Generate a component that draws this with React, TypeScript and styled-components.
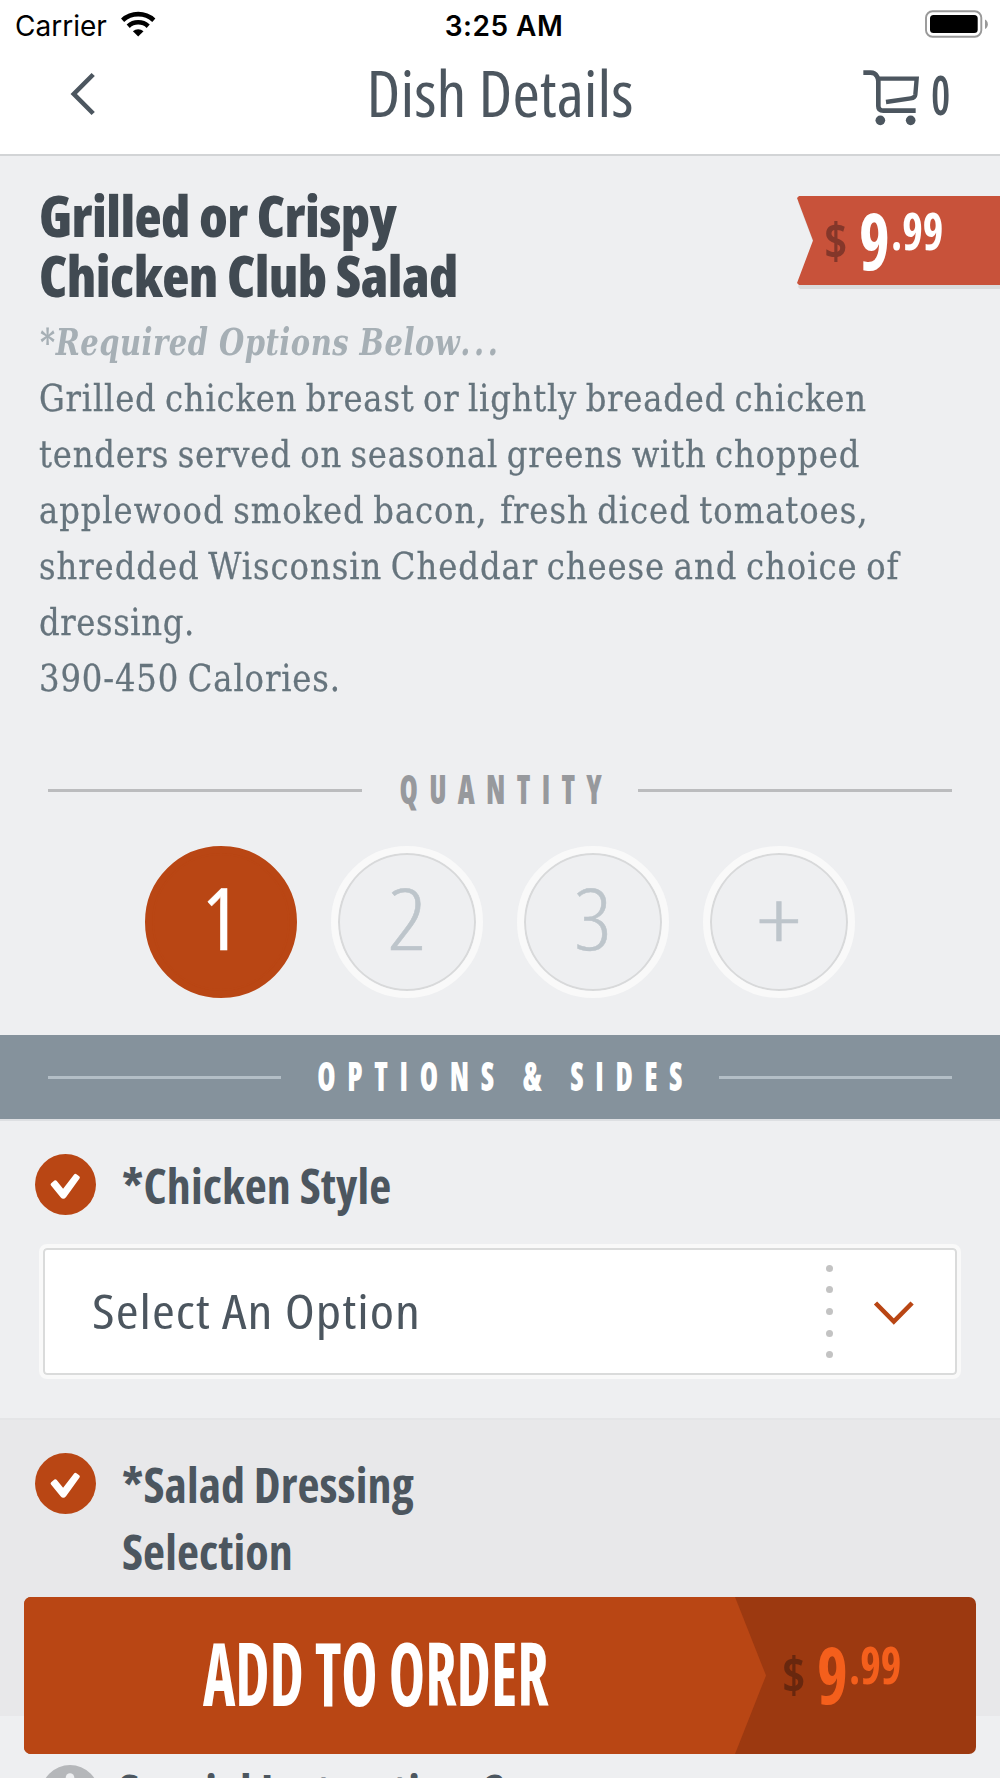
import React from "react";
import styled, { createGlobalStyle } from "styled-components";

const SANS = '"Open Sans", "Noto Sans", sans-serif';
const SERIF = '"DejaVu Serif", "Liberation Serif", serif';
const SYSTEM = 'Inter, "Liberation Sans", sans-serif';

const color = {
  slate: "#4c565f",
  title: "#414a52",
  body: "#66747d",
  muted: "#a6afb5",
  page: "#eeeff1",
  shade: "#e8e8ea",
  rust: "#b94614",
  rustDark: "#9c3910",
  bar: "#85929c",
};

const GlobalStyle = createGlobalStyle`
  * { box-sizing: border-box; }
  body { margin: 0; background: ${color.page}; }
  button { border: 0; padding: 0; margin: 0; background: none; font: inherit; text-align: left; }
`;

const Screen = styled.div`
  position: relative;
  width: 1000px;
  height: 1778px;
  overflow: hidden;
  background: ${color.page};
  font-family: ${SANS};
  font-stretch: 75%;
  color: ${color.slate};
`;

const Header = styled.header`
  height: 156px;
  background: #fff;
  border-bottom: 2px solid #d2d4d6;
`;

const StatusBar = styled.div`
  display: grid;
  grid-template-columns: 1fr auto 1fr;
  height: 51px;
  padding: 0 12px 0 15px;
  font-family: ${SYSTEM};
  font-stretch: 100%;
  font-size: 28px;
  line-height: 52px;
  color: #000;
`;

const Carrier = styled.div`
  display: flex;
  align-items: flex-start;
  gap: 14px;

  svg { margin-top: 11px; }
`;

const Clock = styled.div`
  font-weight: 600;
  letter-spacing: 0.5px;
  padding-left: 5px;
`;

const BatteryCell = styled.div`
  display: flex;
  justify-content: flex-end;
  align-items: flex-start;
  padding-top: 10px;
`;

const NavBar = styled.nav`
  display: grid;
  grid-template-columns: 300px 1fr 300px;
  height: 80px;
  align-items: center;
`;

const BackButton = styled.button`
  display: flex;
  padding-left: 69px;
  padding-top: 5px;
`;

const NavTitle = styled.h1`
  margin: 0;
  text-align: center;
  font-size: 64px;
  font-weight: 400;
  line-height: 80px;
  transform: translateY(2px) scaleX(1.035);
`;

const CartButton = styled.button`
  display: flex;
  align-items: center;
  height: 80px;
  padding-left: 162px;
  color: ${color.slate};

  svg { margin-top: 13px; flex: none; }
`;

const CartCount = styled.span`
  margin-left: 10px;
  font-size: 54px;
  font-weight: 600;
  line-height: 80px;
  transform: translateY(3px) scaleX(0.8);
  transform-origin: 0 50%;
`;

const Intro = styled.section`
  display: flex;
  justify-content: space-between;
  height: 606px;
`;

const IntroText = styled.div`
  padding: 29px 0 0 39px;
`;

const DishName = styled.h2`
  margin: 0 0 9px;
  font-size: 56px;
  font-weight: 800;
  line-height: 60px;
  letter-spacing: -0.6px;
  white-space: nowrap;
  color: ${color.title};
`;

const RequiredNote = styled.p`
  width: 600px;
  margin: 0 0 0 1px;
  font-family: ${SERIF};
  font-style: italic;
  font-weight: 700;
  font-stretch: 100%;
  font-size: 38px;
  line-height: 56px;
  letter-spacing: 0.6px;
  white-space: nowrap;
  color: ${color.muted};
  transform: scaleX(0.764);
  transform-origin: 0 0;
`;

const Ellipsis = styled.span`
  letter-spacing: 4.8px;
`;

const Description = styled.p`
  width: 740px;
  margin: 0;
  font-family: ${SERIF};
  font-stretch: 100%;
  font-size: 38px;
  line-height: 56.1px;
  word-spacing: -3px;
  color: ${color.body};
  -webkit-text-stroke: 0.3px ${color.body};
  transform: scaleX(0.85);
  transform-origin: 0 0;
`;

const DescriptionLine = styled.span<{ $tracking: number }>`
  display: block;
  white-space: pre;
  letter-spacing: ${(p) => p.$tracking}px;
`;

const PriceTag = styled.div`
  flex: none;
  width: 203px;
  height: 94px;
  margin-top: 40px;
  filter: drop-shadow(1px 4px 0 #dadbdc);
`;

const PriceTagShape = styled.div`
  height: 89px;
  padding: 16.5px 0 0 27px;
  background: #c8523a;
  clip-path: polygon(0 2px, 2px 0, 100% 0, 100% 100%, 2px 100%, 0 87px, 16px 50%);
`;

const PriceRow = styled.div<{ $sign: string; $amount: string }>`
  display: flex;
  align-items: flex-start;
  font-weight: 700;
  line-height: 57px;
  color: ${(p) => p.$amount};

  > :first-child { color: ${(p) => p.$sign}; }
`;

const Glyph = styled.span<{ $size: number; $width: number; $scale: number; $rise: number }>`
  flex: none;
  width: ${(p) => p.$width}px;
  margin-top: ${(p) => -p.$rise}px;
  font-size: ${(p) => p.$size}px;
  white-space: nowrap;
  transform: scaleX(${(p) => p.$scale});
  transform-origin: 0 0;
`;

const Heading = styled.div<{ $line: string; $lineWidth: number; $text: string; $bg?: string; $height: number }>`
  display: flex;
  align-items: center;
  height: ${(p) => p.$height}px;
  padding: 0 48px;
  background: ${(p) => p.$bg ?? "transparent"};
  color: ${(p) => p.$text};

  &::before,
  &::after {
    content: "";
    flex: none;
    width: ${(p) => p.$lineWidth}px;
    height: 3px;
    background: ${(p) => p.$line};
  }
`;

const HeadingCell = styled.div`
  display: flex;
  flex: 1;
  min-width: 0;
  justify-content: center;
`;

const HeadingText = styled.h3<{ $tracking: number }>`
  flex: none;
  margin: -4px -16px 0 0;
  font-size: 41px;
  font-weight: 800;
  line-height: 56px;
  letter-spacing: ${(p) => p.$tracking}px;
  white-space: nowrap;
  transform: translateX(-2px) scaleX(0.72);
`;

const QuantityRow = styled.div`
  display: flex;
  justify-content: center;
  gap: 34px;
  height: 217px;
  padding-top: 28px;
`;

const QuantityButton = styled.button<{ $active?: boolean }>`
  display: flex;
  align-items: center;
  justify-content: center;
  width: 152px;
  height: 152px;
  border: 7px solid ${(p) => (p.$active ? color.rust : "#f9f9f9")};
  border-radius: 50%;
  background: ${(p) => (p.$active ? color.rust : color.page)};
  box-shadow: inset 0 0 0 2px ${(p) => (p.$active ? color.rust : "#d8d9da")};
  color: ${(p) => (p.$active ? "#fff" : "#bdc5cb")};
`;

const QuantityLabel = styled.span<{ $weight: number; $scale: number; $drop?: number }>`
  font-size: 85px;
  font-weight: ${(p) => p.$weight};
  line-height: 130px;
  -webkit-text-stroke: 0.5px currentColor;
  transform: translate(-0.5px, ${(p) => (p.$drop ?? 0) - 5}px) scaleX(${(p) => p.$scale});
`;

const OptionSection = styled.section<{ $shade?: boolean; $height: number }>`
  height: ${(p) => p.$height}px;
  padding: 33px 39px 0 35px;
  background: ${(p) => (p.$shade ? color.shade : color.page)};
  border-top: 2px solid ${(p) => (p.$shade ? "#e4e5e7" : "#dddfe2")};
`;

const OptionHeader = styled.div`
  display: flex;
  align-items: flex-start;
  gap: 26px;
  height: 61px;

  svg { flex: none; }
`;

const OptionTitle = styled.h4`
  width: 340px;
  margin: -1px 0 0;
  font-size: 48px;
  font-weight: 700;
  line-height: 66.7px;
  letter-spacing: 0.1px;
`;

const Select = styled.button`
  display: flex;
  align-items: center;
  width: 922px;
  height: 135px;
  margin: 29px 0 0 4px;
  padding: 0 42px 0 49px;
  border: 4px solid #f9f9f9;
  border-radius: 8px;
  background: #fff;
  box-shadow: inset 0 0 0 2px #dadbdb;
  color: ${color.slate};
`;

const SelectLabel = styled.span`
  flex: 1;
  margin-top: -1px;
  font-size: 48px;
  letter-spacing: 0.9px;
  line-height: 66px;
  transform: scaleX(1.15);
  transform-origin: 0 50%;
`;

const Dots = styled.span`
  display: flex;
  flex-direction: column;
  gap: 14.5px;
  margin-right: 40px;
`;

const Dot = styled.i`
  width: 7.2px;
  height: 7.2px;
  border-radius: 50%;
  background: #c3c3c3;
`;

const Chevron = styled.svg`
  margin-top: 2px;
`;

const InstructionSection = styled.section`
  display: flex;
  align-items: flex-start;
  gap: 19px;
  padding: 49px 0 0 41px;
`;

const InstructionTitle = styled.h4`
  margin: -7px 0 0;
  font-size: 48px;
  font-weight: 700;
  line-height: 67px;
  letter-spacing: 0.3px;
  white-space: nowrap;
`;

const OrderBar = styled.button`
  position: absolute;
  left: 24px;
  right: 24px;
  bottom: 24px;
  display: flex;
  height: 157px;
  border-radius: 7px;
  overflow: hidden;
  background: ${color.rustDark};
  color: #fff;
`;

const OrderLabel = styled.span`
  display: flex;
  align-items: center;
  justify-content: center;
  width: 742px;
  height: 157px;
  padding: 0 38px 7px 0;
  background: ${color.rust};
  clip-path: polygon(0 0, 711px 0, 742px 50%, 711px 100%, 0 100%);
`;

const OrderText = styled.span`
  font-size: 87px;
  font-weight: 700;
  line-height: 120px;
  white-space: nowrap;
  transform: scaleX(0.706);
`;

const OrderPrice = styled.span`
  padding: 50px 0 0 16px;
`;

function Price({ sign, amount }: { sign: string; amount: string }) {
  return (
    <PriceRow as="span" $sign={sign} $amount={amount}>
      <Glyph $size={50} $width={34.5} $scale={1} $rise={1}>$</Glyph>
      <Glyph $size={79} $width={32} $scale={0.83} $rise={1.7}>9</Glyph>
      <Glyph $size={51} $width={54} $scale={0.86} $rise={10.8}>.99</Glyph>
    </PriceRow>
  );
}

function WifiIcon() {
  return (
    <svg width="35" height="26" viewBox="0 0 35 26" fill="none" stroke="#000" strokeWidth="4.6">
      <path d="M1.6 9.2a23 23 0 0 1 31.2 0" />
      <path d="M7.2 15.2a14.8 14.8 0 0 1 20 0" />
      <path d="M11.9 20.2a8.2 8.2 0 0 1 10.6 0L17.2 25.4z" fill="#000" stroke="none" />
    </svg>
  );
}

function BatteryIcon() {
  return (
    <svg width="63" height="28" viewBox="0 0 63 28">
      <rect x="1" y="1.3" width="55.3" height="25.4" rx="6.5" fill="none" stroke="#999" strokeWidth="1.9" />
      <rect x="5" y="5" width="47.7" height="18" rx="3.5" />
      <path d="M60 9.5c3.8 1.6 3.8 7.8 0 9.4z" fill="#999" />
    </svg>
  );
}

function CartIcon() {
  return (
    <svg width="59" height="59" viewBox="0 0 177 177" fill="none" stroke="currentColor" strokeWidth="14">
      <path d="M4 14h22q13 0 19 11q4 6 4 15v74q0 14 15 14h97" />
      <path d="M49 32h115l-4 48q-1 9-14 11l-74 11" strokeWidth="13" />
      <circle cx="55" cy="157" r="14.5" fill="currentColor" stroke="none" />
      <circle cx="146" cy="157" r="14.5" fill="currentColor" stroke="none" />
    </svg>
  );
}

function CheckBadge() {
  return (
    <svg width="61" height="61" viewBox="0 0 61 61">
      <circle cx="30.5" cy="30.5" r="30.5" fill={color.rust} />
      <path d="M16.2 29.2l3.2-2.6q1.4-.8 2.4.5l6.3 7.6 11-14.2q1-1.2 2.4-.3l2.7 2q1.2 1 .3 2.3L31 43.3q-2.7 3-5.4 0L16 31.5q-1-1.4.2-2.3z" fill="#fff" />
    </svg>
  );
}

const description = [
  { text: "Grilled chicken breast or lightly breaded chicken", tracking: 0.92 },
  { text: "tenders served on seasonal greens with chopped", tracking: 0.93 },
  { text: "applewood smoked bacon,\u200A fresh diced tomatoes,", tracking: 1.08 },
  { text: "shredded Wisconsin Cheddar cheese and choice of", tracking: 1.1 },
  { text: "dressing.", tracking: 0.7 },
  { text: "390-450 Calories.", tracking: 1 },
];

export default function App() {
  return (
    <Screen>
      <GlobalStyle />
      <Header>
        <StatusBar>
          <Carrier>
            Carrier
            <WifiIcon />
          </Carrier>
          <Clock>3:25 AM</Clock>
          <BatteryCell>
            <BatteryIcon />
          </BatteryCell>
        </StatusBar>
        <NavBar>
          <BackButton aria-label="Back">
            <svg width="28" height="44" viewBox="0 0 28 44" fill="none" stroke={color.slate} strokeWidth="4.6">
              <path d="M24.2 2.5L4.8 22l19.4 19.5" />
            </svg>
          </BackButton>
          <NavTitle>Dish Details</NavTitle>
          <CartButton>
            <CartIcon />
            <CartCount>0</CartCount>
          </CartButton>
        </NavBar>
      </Header>

      <Intro>
        <IntroText>
          <DishName>
            Grilled or Crispy
            <br />
            Chicken Club Salad
          </DishName>
          <RequiredNote>
            *Required Options Below<Ellipsis>...</Ellipsis>
          </RequiredNote>
          <Description>
            {description.map((line) => (
              <DescriptionLine key={line.text} $tracking={line.tracking}>
                {line.text}
              </DescriptionLine>
            ))}
          </Description>
        </IntroText>
        <PriceTag>
          <PriceTagShape>
            <Price sign="#84372a" amount="#fff" />
          </PriceTagShape>
        </PriceTag>
      </Intro>

      <Heading $height={56} $line="#bbbcbe" $lineWidth={314} $text="#97999d">
        <HeadingCell>
          <HeadingText $tracking={15.7}>QUANTITY</HeadingText>
        </HeadingCell>
      </Heading>
      <QuantityRow>
        <QuantityButton $active>
          <QuantityLabel $weight={400} $scale={1}>1</QuantityLabel>
        </QuantityButton>
        <QuantityButton>
          <QuantityLabel $weight={300} $scale={1.12}>2</QuantityLabel>
        </QuantityButton>
        <QuantityButton>
          <QuantityLabel $weight={300} $scale={1.08}>3</QuantityLabel>
        </QuantityButton>
        <QuantityButton>
          <QuantityLabel $weight={300} $scale={1.27} $drop={1}>+</QuantityLabel>
        </QuantityButton>
      </QuantityRow>

      <Heading $height={84} $line="#b3bec6" $lineWidth={233} $text="#fff" $bg={color.bar}>
        <HeadingCell>
          <HeadingText $tracking={16.2}>OPTIONS &amp; SIDES</HeadingText>
        </HeadingCell>
      </Heading>

      <OptionSection $height={299}>
        <OptionHeader>
          <CheckBadge />
          <OptionTitle>*Chicken Style</OptionTitle>
        </OptionHeader>
        <Select>
          <SelectLabel>Select An Option</SelectLabel>
          <Dots>
            <Dot />
            <Dot />
            <Dot />
            <Dot />
            <Dot />
          </Dots>
          <Chevron width="42" height="26" viewBox="0 0 42 26" fill="none" stroke={color.rust} strokeWidth="4.6">
            <path d="M2.5 3L20.8 21.5 39.1 3" />
          </Chevron>
        </Select>
      </OptionSection>

      <OptionSection $height={298} $shade>
        <OptionHeader>
          <CheckBadge />
          <OptionTitle>*Salad Dressing Selection</OptionTitle>
        </OptionHeader>
      </OptionSection>

      <InstructionSection>
        <svg width="58" height="58" viewBox="0 0 58 58">
          <circle cx="29" cy="29" r="29" fill="#b5b7ba" />
          <circle cx="29" cy="12.5" r="4.3" fill={color.page} />
          <rect x="25" y="21" width="8" height="25" rx="4" fill={color.page} />
        </svg>
        <InstructionTitle>Special Instructions?</InstructionTitle>
      </InstructionSection>

      <OrderBar>
        <OrderLabel>
          <OrderText>ADD TO ORDER</OrderText>
        </OrderLabel>
        <OrderPrice>
          <Price sign="#68270e" amount="#f45f1c" />
        </OrderPrice>
      </OrderBar>
    </Screen>
  );
}
